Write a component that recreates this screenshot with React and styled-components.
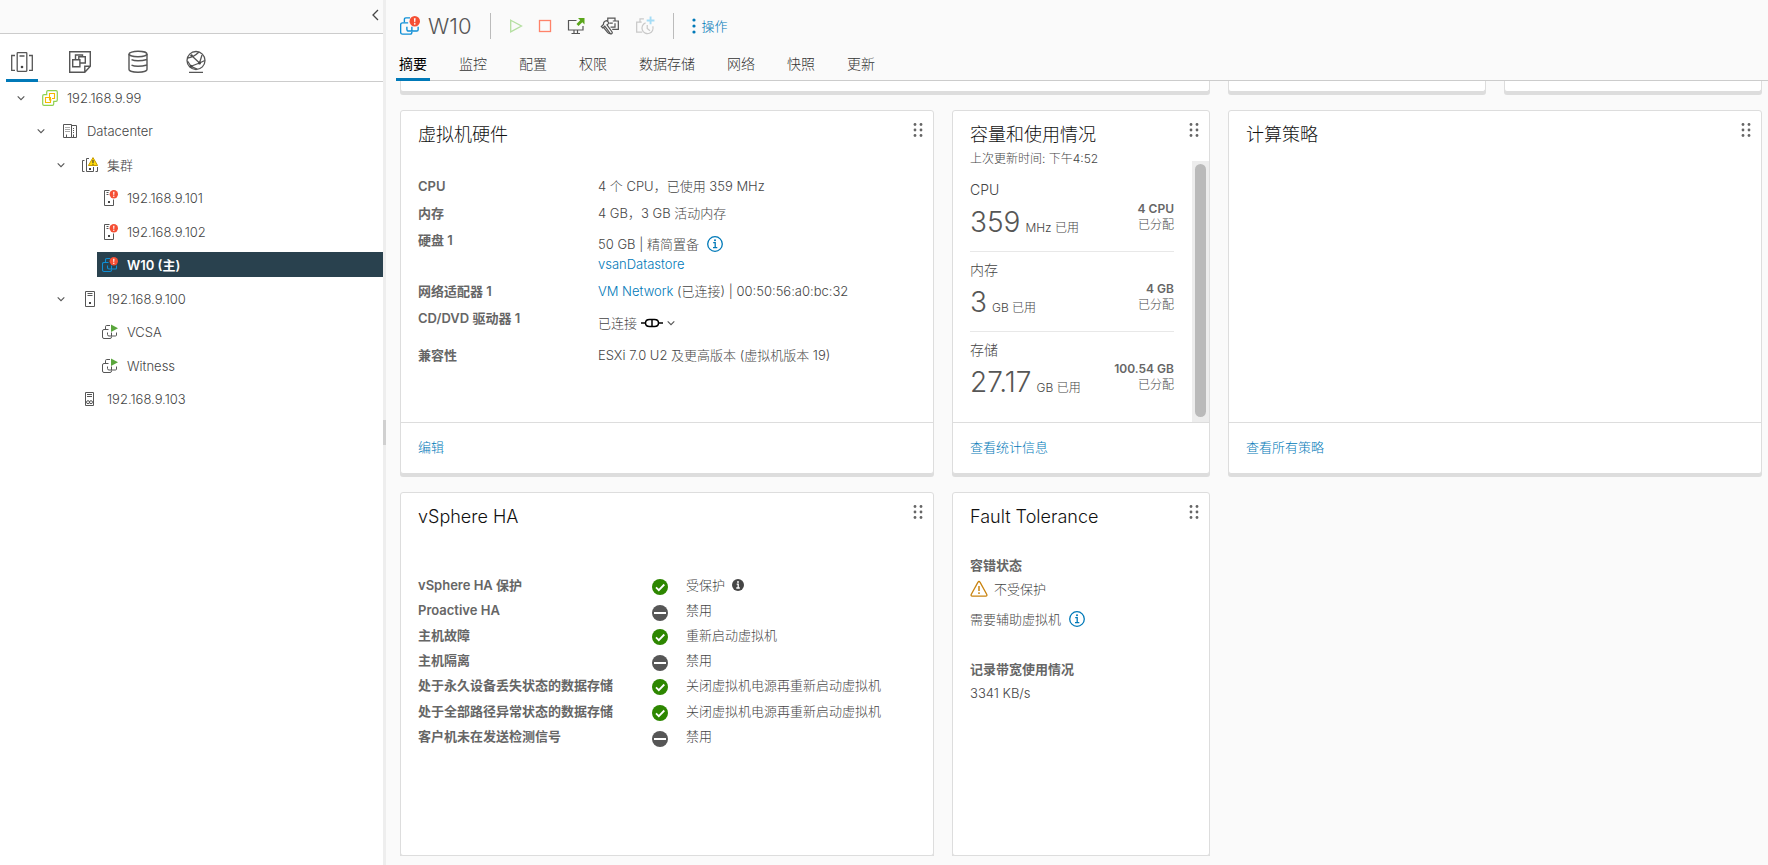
import React, { useState } from 'react';
import styled, { createGlobalStyle, css } from 'styled-components';

const GlobalStyle = createGlobalStyle`
  * {
    box-sizing: border-box;
  }
  body {
    margin: 0;
    background: #fafafa;
    color: #454545;
    font-family: Inter, "Noto Sans CJK SC", sans-serif;
    font-size: 13px;
    font-weight: 300;
    line-height: 20px;
  }
  button {
    padding: 0;
    border: 0;
    background: none;
    color: inherit;
    font: inherit;
    cursor: pointer;
  }
  a {
    color: #0079b8;
    text-decoration: none;
  }
  svg {
    display: block;
    flex: none;
  }
`;

/* ---------- icons ---------- */

const Svg = ({ size = 16, box = 16, color = '#565656', width = 1, children }) => (
  <svg width={size} height={size} viewBox={`0 0 ${box} ${box}`} fill="none" stroke={color} strokeWidth={width} aria-hidden="true">
    {children}
  </svg>
);

const Chevron = ({ size = 8 }) => (
  <Svg size={size} box={8} color="#565656" width={1.1}>
    <path d="M.7 2.3L4 5.600l3.300-3.300" />
  </Svg>
);

const AlertBadge = () => (
  <g stroke="none">
    <circle cx="11.8" cy="4.2" r="4.2" fill="#f54f34" />
    <path d="M11.1 1.8h1.4l-.3 3.100h-.8z" fill="#fff" />
    <circle cx="11.8" cy="6.200" r=".7" fill="#fff" />
  </g>
);

const VmShape = () => (
  <>
    <path d="M3.5 5V2.7q0-1.2 1.2-1.2H8" />
    <path d="M9.5 12.5V13q0 1.5-1.5 1.5H2Q.5 14.5.5 13V7Q.5 5.5 2 5.5h4.5" />
    <path d="M5.5 8.5v2q0 1.5 1.5 1.500h6.500q1 0 1-1V8.500" />
    <path d="M9.500 12V8.500" />
  </>
);

const VmAlertIcon = ({ size, color = '#0f8fd6' }) => (
  <Svg size={size} color={color} width={1.1}>
    <VmShape />
    <AlertBadge />
  </Svg>
);

const VmRunningIcon = () => (
  <Svg>
    <VmShape />
    <path d="M9 .5l7 3.700-7 3.800z" fill="#5aa63c" stroke="none" />
  </Svg>
);

const HostIcon = () => (
  <Svg>
    <path d="M3.500.5h9v15h-9zM5.500 2.500h5M5.500 4.500h5" />
    <path d="M7 11h2v2H7z" fill="#454545" stroke="none" />
  </Svg>
);

const HostAlertIcon = () => (
  <Svg>
    <path d="M7.500.5h-5v15h9V9.500M4.500 2.500h2M4.500 4.500h2" />
    <path d="M6 11h2v2H6z" fill="#454545" stroke="none" />
    <AlertBadge />
  </Svg>
);

const HostStandbyIcon = () => (
  <Svg>
    <path d="M3.500 1.500h8v13h-8zM5 3.500h5M5 5.500h5" />
    <circle cx="6" cy="11.200" r="1.500" />
    <circle cx="9" cy="11.200" r="1.500" />
  </Svg>
);

const VcenterIcon = () => (
  <Svg>
    <path d="M6 .7h8q1.300 0 1.300 1.300v8q0 1.300-1.300 1.300h-2.300V14q0 1.300-1.300 1.300H2Q.7 15.300.7 14V6Q.7 4.700 2 4.700h2.700V2Q4.700.7 6 .7z" stroke="#8fd14f" strokeWidth="1.200" />
    <path d="M7.500 6V3.500h5v5H10M3.500 7.500h5v5h-5zM7.500 6v4h2" stroke="#f5b800" strokeWidth="1.100" />
  </Svg>
);

const DatacenterIcon = () => (
  <Svg>
    <path d="M1.500 1.500h8v13h-8zM9.500 2.500h5v12h-5" />
    <path d="M3.500 4.500H8M3.500 6.500H8M3.500 8.500H8M11 5.500h2M11 7.500h2M11 9.500h2" strokeDasharray="1 1" />
    <path d="M4.500 14.500v-3M11.500 14.500v-3" />
  </Svg>
);

const ClusterWarningIcon = () => (
  <Svg>
    <path d="M2.500 3.500h-2v11h2M13.500 14.500h2V10M7 1.500H4.500v13h7V10" />
    <path d="M7 11h2v2H7z" fill="#454545" stroke="none" />
    <path d="M11 .6L15.600 8.500H6.400z" fill="#ffdc0b" stroke="#c69a00" strokeLinejoin="round" />
    <path d="M11 3v3M11 6.800v1" stroke="#333" strokeWidth="1.100" />
  </Svg>
);

const HostsTabIcon = () => (
  <Svg size={24} box={24} width={1.3}>
    <rect x="7.2" y="2.7" width="9.6" height="18.6" rx=".5" />
    <path d="M9.5 6h5M5 5.500H1.700v14.800H5M19 5.500h3.300v14.800H19" />
    <circle cx="12" cy="17" r="1.300" fill="#454545" stroke="none" />
  </Svg>
);

const VmsTabIcon = () => (
  <Svg size={24} box={24} width={1.4}>
    <path d="M1.700 1.700h20.600v14.500l-5.500 6H1.700zM16.800 22v-5.800h5.400" />
    <path d="M4.700 9.700h7.200v7H4.700zM7.500 9.500V5h7v2M12 13h5.300V6.800h-6.500v2.700" />
  </Svg>
);

const StorageTabIcon = () => (
  <Svg size={24} box={24} width={1.4}>
    <ellipse cx="12" cy="4" rx="9" ry="2.700" />
    <path d="M3 4v15.500c0 1.500 4 2.700 9 2.700s9-1.200 9-2.700V4" />
    <path d="M5.500 9.700c1.500.7 3.800 1.100 6.500 1.100s6-.4 9-1.300M5.500 15.200c1.500.7 3.800 1.100 6.500 1.100s6-.4 9-1.300" />
  </Svg>
);

const NetworkTabIcon = () => (
  <Svg size={24} box={24} width={1.3}>
    <circle cx="12" cy="10.500" r="9" />
    <path d="M5 22.300h14M3.500 8c4-.5 8-2.500 11.500-6M7.500 5.500l8 7.500 5.300-2.500M15.500 13L7 16.300 3.500 11M15.500 13l2.500-8M7 16.300l6 2.900" />
    <circle cx="15.500" cy="13" r="1.500" fill="#454545" stroke="none" />
    <circle cx="7" cy="16.300" r="1.500" fill="#454545" stroke="none" />
    <circle cx="7.500" cy="5.500" r="1.200" fill="#454545" stroke="none" />
  </Svg>
);

const PlayIcon = () => (
  <Svg size={14} box={14} color="#b4dfa0" width={1.3}>
    <path d="M1.700 1.200L12.500 7 1.700 12.800z" />
  </Svg>
);

const StopIcon = () => (
  <Svg size={14} box={14} color="#ff8269" width={1.3}>
    <rect x="1.500" y="1.500" width="11" height="11" />
  </Svg>
);

const ConsoleIcon = () => (
  <Svg size={18} box={18} width={1.2}>
    <path d="M9.500 3.500h-8v9.500h14.500V9M7 13v3.200M10.500 13v3.200M4.500 16.500h8.500" />
    <path d="M11 1h6.500v6.500l-2.200-2.200-3.800 3.700-2-2 3.700-3.800z" fill="#5aa61a" stroke="none" />
  </Svg>
);

const SettingsIcon = () => (
  <Svg size={20} box={18} width={1.1}>
    <path d="M7 4.500V2h6.500v2.500M9 6.500h2.500M11.500 4.500h5v7.500h-5.500M9.500 10h4V6.500" />
    <path d="M6.300 4.200c-2 .3-3.300 1.700-3.200 3.400L1.200 9.500l1.300 1.300 1.800-1.600 5 6.600c.8.900 2.300-.4 1.600-1.400L6.300 8l1.900-1.500z" />
    <path d="M3.100 10.300l3.700 4.500q.9 1.200 2.500 1" />
  </Svg>
);

const SnapshotIcon = () => (
  <Svg size={20} box={18} color="#c9c9c9" width={1.1}>
    <path d="M4.500 5.500v-3H8M6.500 14.500h-5v-9H6" />
    <path d="M9.500 6.200a5 5 0 1 0 6.500 3" />
    <path d="M11 8v3.200l2.500 2" />
    <path d="M14 .5v7M10.500 4h7" stroke="#a5dcf5" strokeWidth="1.700" />
  </Svg>
);

const InfoIcon = () => (
  <Svg color="#0079b8" width={1.3}>
    <circle cx="8" cy="8" r="7.300" />
    <path d="M6.200 6.700h2v4.800M6 11.700h4.300" />
    <circle cx="8" cy="4.200" r="1" fill="#0079b8" stroke="none" />
  </Svg>
);

const InfoSolidIcon = () => (
  <Svg size={12} box={12} color="#fff" width={1.3}>
    <circle cx="6" cy="6" r="6" fill="#454545" stroke="none" />
    <path d="M4.700 5.200h1.500v3.500M4.300 9h3.500" />
    <circle cx="6" cy="3" r=".9" fill="#fff" stroke="none" />
  </Svg>
);

const CheckIcon = () => (
  <Svg color="#fff" width={1.8}>
    <circle cx="8" cy="8" r="8" fill="#2d8700" stroke="none" />
    <path d="M4 8.300l2.800 2.800L12.300 5.500" />
  </Svg>
);

const MinusIcon = () => (
  <Svg color="#fff" width={2}>
    <circle cx="8" cy="8" r="8" fill="#565656" stroke="none" />
    <path d="M2 8h12" />
  </Svg>
);

const WarningIcon = () => (
  <Svg size={18} box={18} color="#c98411" width={1.3}>
    <path d="M9 1.500q.7 0 1 .6l6.800 12.400q.5 1.500-1 1.700H2.200q-1.500-.2-1-1.700L8 2.100q.3-.6 1-.6z" />
    <path d="M9 6v5M9 12.300v1.700" strokeWidth="1.500" />
  </Svg>
);

const PlugIcon = () => (
  <svg width="22" height="10" viewBox="0 0 22 10" fill="none" stroke="#000" strokeWidth="1.500" aria-hidden="true">
    <path d="M0 5h4.500M17.500 5H22M11 1.500H8.500Q4.500 1.500 4.500 5t4 3.500H11M11 1.500h2.500q4 0 4 3.500t-4 3.500H11M11 1.500v7" />
  </svg>
);

const GripIcon = () => (
  <svg width="10" height="16" viewBox="0 0 10 16" fill="#666" aria-hidden="true">
    {[2.5, 8, 13.5].map((y) => (
      <g key={y}>
        <circle cx="2" cy={y} r="1.400" />
        <circle cx="8" cy={y} r="1.400" />
      </g>
    ))}
  </svg>
);

const DotsIcon = () => (
  <svg width="4" height="16" viewBox="0 0 4 16" fill="#0079b8" aria-hidden="true">
    <circle cx="2" cy="2" r="1.600" />
    <circle cx="2" cy="8" r="1.600" />
    <circle cx="2" cy="14" r="1.600" />
  </svg>
);

/* ---------- layout ---------- */

const Page = styled.div`
  display: flex;
  height: 100vh;
  overflow: hidden;
`;

const Sidebar = styled.aside`
  display: flex;
  flex-direction: column;
  flex: none;
  width: 383px;
  background: #fff;
`;

const SidebarTop = styled.div`
  display: flex;
  justify-content: flex-end;
  align-items: center;
  height: 34px;
  padding: 0 2px 4px 0;
  border-bottom: 1px solid #ccc;
  background: #fafafa;
`;

const ViewTabs = styled.nav`
  display: flex;
  align-items: flex-end;
  gap: 26px;
  height: 48px;
  margin-left: 6px;
  border-bottom: 1px solid #ccc;
`;

const ViewTab = styled.button`
  display: flex;
  justify-content: center;
  width: 32px;
  height: 35px;
  margin-bottom: -1px;
  padding-top: 3px;
  border-bottom: 3px solid ${(p) => (p.$active ? '#0079b8' : 'transparent')};
`;

const Tree = styled.ul`
  margin: 0;
  padding: 3px 0 0;
  list-style: none;
`;

const TreeRow = styled.li`
  display: flex;
  align-items: center;
  height: 25px;
  margin-bottom: 8px;
  padding-left: ${(p) => p.$level * 20}px;
  &:nth-child(even) {
    margin-bottom: 9px;
  }
`;

const Caret = styled.button`
  display: flex;
  justify-content: center;
  flex: none;
  width: 37px;
  padding-left: 5px;
`;

const CaretSpace = styled.span`
  flex: none;
  width: 37px;
`;

const TreeLabel = styled.button`
  display: flex;
  align-items: center;
  flex: 1;
  gap: 9px;
  height: 25px;
  padding-left: 5px;
  text-align: left;
  ${(p) =>
    p.$selected &&
    css`
      background: #29414e;
      color: #fff;
      font-weight: 600;
    `}
`;

const Splitter = styled.div`
  display: flex;
  align-items: center;
  flex: none;
  width: 3px;
  background: #eee;
`;

const SplitterGrip = styled.div`
  width: 3px;
  height: 25px;
  background: #d0d0d0;
`;

const Main = styled.main`
  display: flex;
  flex-direction: column;
  flex: 1;
  min-width: 0;
`;

const Header = styled.header`
  display: flex;
  align-items: center;
  flex: none;
  height: 50px;
  padding: 1px 0 0 14px;
`;

const PageTitle = styled.h1`
  margin: 0 0 0 8px;
  color: #565656;
  font-size: 22px;
  font-weight: 300;
  line-height: 26px;
`;

const Divider = styled.span`
  width: 1px;
  height: 26px;
  margin: 0 18px;
  background: #bbb;
`;

const Tools = styled.div`
  display: flex;
  align-items: center;
  gap: 15px;
`;

const ActionsButton = styled.button`
  display: flex;
  align-items: center;
  gap: 6px;
  color: #0079b8;
`;

const Tabs = styled.nav`
  display: flex;
  flex: none;
  gap: 26px;
  height: 31px;
  margin-left: 10px;
  border-bottom: 1px solid #ccc;
`;

const Tab = styled.button`
  flex: none;
  height: 31px;
  padding: 0 3px;
  border-bottom: 3px solid ${(p) => (p.$active ? '#0079b8' : 'transparent')};
  color: ${(p) => (p.$active ? '#000' : '#333')};
  font-size: 14px;
  font-weight: ${(p) => (p.$active ? 400 : 300)};
`;

const Cards = styled.section`
  display: grid;
  grid-template-columns: repeat(5, 1fr);
  grid-template-rows: 11px;
  grid-auto-rows: 364px;
  gap: 18px;
  min-height: 0;
  padding: 0 6px 0 14px;
  overflow: hidden;
`;

const Card = styled.article`
  display: flex;
  flex-direction: column;
  grid-column: span ${(p) => p.$span || 1};
  min-width: 0;
  border: 1px solid #ddd;
  border-radius: 3px;
  background: #fff;
  box-shadow: 0 3px 0 #ddd;
`;

const CardTail = styled(Card)`
  border-top: 0;
  border-radius: 0 0 3px 3px;
`;

const CardHead = styled.div`
  display: flex;
  justify-content: space-between;
  padding: 11px 10px 0 17px;
`;

const CardTitle = styled.h2`
  margin: 0;
  padding-top: 1px;
  color: #111;
  font-size: 18px;
  font-weight: 300;
  line-height: 24px;
`;

const Grip = styled.button`
  height: 16px;
`;

const CardBody = styled.div`
  flex: 1;
  min-height: 0;
  padding: ${(p) => p.$top || 0}px 17px 0;
`;

const CardFoot = styled.div`
  display: flex;
  align-items: center;
  height: 51px;
  padding: 0 17px 2px;
  border-top: 1px solid #ddd;
`;

const Hardware = styled.dl`
  display: grid;
  grid-template-columns: 180px 1fr;
  margin: 0;
`;

const HardwareName = styled.dt`
  padding: 3px 0 4px;
  color: #666;
  font-weight: 600;
`;

const HardwareValue = styled.dd`
  margin: 0;
  padding: ${(p) => (p.$tall ? '8px 0 9px' : '3px 0 4px')};
`;

const Inline = styled.span`
  display: flex;
  align-items: center;
  gap: ${(p) => p.$gap || 8}px;
`;

const DiskValue = styled(HardwareValue)`
  padding: 7px 0 4px;
`;

const Subtitle = styled.p`
  margin: 0;
  padding: 3px 17px 0;
  font-size: 12px;
  line-height: 18px;
`;

const UsagePane = styled.div`
  display: flex;
  flex: 1;
  min-height: 0;
  margin-top: -7px;
`;

const UsageList = styled.div`
  flex: 1;
  padding: 6px 18px 0 17px;
`;

const Usage = styled.section`
  height: 80px;
  padding-top: 9px;
  border-bottom: 1px solid #e8e8e8;
  &:first-child {
    height: 85px;
    padding-top: 14px;
  }
  &:last-child {
    border-bottom: 0;
  }
`;

const UsageName = styled.h3`
  margin: 0;
  font-size: 14px;
  font-weight: 300;
  line-height: 18px;
`;

const UsageRow = styled.div`
  display: flex;
  justify-content: space-between;
  font-size: 12px;
  line-height: 16px;
`;

const UsageValue = styled.div`
  padding-top: 9px;
  line-height: 28px;
`;

const Big = styled.span`
  margin-right: 5px;
  color: #565656;
  font-size: 28px;
`;

const Total = styled.div`
  padding-top: 2px;
  text-align: right;
`;

const Strong = styled.strong`
  display: block;
  color: #666;
  font-weight: 600;
`;

const ScrollTrack = styled.div`
  display: flex;
  width: 17px;
  padding: 3px 3px 5px;
  background: #ededed;
`;

const ScrollThumb = styled.div`
  flex: 1;
  border-radius: 6px;
  background: #bababa;
`;

const HaTable = styled.table`
  width: 100%;
  border-collapse: collapse;
`;

const HaRow = styled.tr`
  height: ${(p) => (p.$off ? 24 : 26)}px;
`;

const HaName = styled.th`
  width: 234px;
  padding: 0;
  color: #666;
  font-weight: 600;
  text-align: left;
`;

const HaIcon = styled.td`
  width: 34px;
  padding: ${(p) => (p.$off ? 6 : 3)}px 0 0;
`;

const HaValue = styled.td`
  padding: 0;
`;

const FtName = styled.h3`
  margin: 0 0 4px;
  color: #666;
  font-size: 13px;
  font-weight: 600;
`;

const FtLine = styled.div`
  display: flex;
  align-items: center;
  gap: ${(p) => p.$gap || 0}px;
  height: 20px;
  margin-bottom: ${(p) => p.$after || 0}px;
`;

/* ---------- data ---------- */

const tree = [
  { label: '192.168.9.99', level: 0, icon: VcenterIcon, open: true },
  { label: 'Datacenter', level: 1, icon: DatacenterIcon, open: true },
  { label: '集群', level: 2, icon: ClusterWarningIcon, open: true },
  { label: '192.168.9.101', level: 3, icon: HostAlertIcon },
  { label: '192.168.9.102', level: 3, icon: HostAlertIcon },
  { label: 'W10 (主)', level: 3, icon: VmAlertIcon },
  { label: '192.168.9.100', level: 2, icon: HostIcon, open: true },
  { label: 'VCSA', level: 3, icon: VmRunningIcon },
  { label: 'Witness', level: 3, icon: VmRunningIcon },
  { label: '192.168.9.103', level: 2, icon: HostStandbyIcon },
];

const views = [
  { name: '主机和集群', icon: HostsTabIcon },
  { name: '虚拟机和模板', icon: VmsTabIcon },
  { name: '存储', icon: StorageTabIcon },
  { name: '网络', icon: NetworkTabIcon },
];

const tools = [
  { name: '打开电源', icon: PlayIcon },
  { name: '关闭电源', icon: StopIcon },
  { name: '启动控制台', icon: ConsoleIcon },
  { name: '编辑设置', icon: SettingsIcon },
  { name: '生成快照', icon: SnapshotIcon },
];

const tabs = ['摘要', '监控', '配置', '权限', '数据存储', '网络', '快照', '更新'];

const usages = [
  { name: 'CPU', used: '359', unit: 'MHz', total: '4 CPU' },
  { name: '内存', used: '3', unit: 'GB', total: '4 GB' },
  { name: '存储', used: '27.17', unit: 'GB', total: '100.54 GB' },
];

const haRows = [
  { name: 'vSphere HA 保护', on: true, value: '受保护', info: true },
  { name: 'Proactive HA', on: false, value: '禁用' },
  { name: '主机故障', on: true, value: '重新启动虚拟机' },
  { name: '主机隔离', on: false, value: '禁用' },
  { name: '处于永久设备丢失状态的数据存储', on: true, value: '关闭虚拟机电源再重新启动虚拟机' },
  { name: '处于全部路径异常状态的数据存储', on: true, value: '关闭虚拟机电源再重新启动虚拟机' },
  { name: '客户机未在发送检测信号', on: false, value: '禁用' },
];

/* ---------- components ---------- */

const CardHeader = ({ title }) => (
  <CardHead>
    <CardTitle>{title}</CardTitle>
    <Grip aria-label="移动">
      <GripIcon />
    </Grip>
  </CardHead>
);

const Navigator = () => {
  const [view, setView] = useState(0);
  const [selected, setSelected] = useState('W10 (主)');

  return (
    <Sidebar>
      <SidebarTop>
        <button aria-label="折叠">
          <Svg size={12} box={12} color="#454545" width={1.3}>
            <path d="M9 1L4 6l5 5" />
          </Svg>
        </button>
      </SidebarTop>
      <ViewTabs>
        {views.map(({ name, icon: Icon }, i) => (
          <ViewTab key={name} aria-label={name} $active={i === view} onClick={() => setView(i)}>
            <Icon />
          </ViewTab>
        ))}
      </ViewTabs>
      <Tree>
        {tree.map(({ label, level, icon: Icon, open }) => (
          <TreeRow key={label} $level={level}>
            {open ? (
              <Caret aria-label={`折叠 ${label}`}>
                <Chevron />
              </Caret>
            ) : (
              <CaretSpace />
            )}
            <TreeLabel $selected={label === selected} onClick={() => setSelected(label)}>
              <Icon />
              {label}
            </TreeLabel>
          </TreeRow>
        ))}
      </Tree>
    </Sidebar>
  );
};

const HardwareCard = () => (
  <Card $span={2}>
    <CardHeader title="虚拟机硬件" />
    <CardBody $top={26}>
      <Hardware>
        <HardwareName>CPU</HardwareName>
        <HardwareValue>4 个 CPU，已使用 359 MHz</HardwareValue>
        <HardwareName>内存</HardwareName>
        <HardwareValue>4 GB，3 GB 活动内存</HardwareValue>
        <HardwareName>硬盘 1</HardwareName>
        <DiskValue>
          <Inline>
            50 GB | 精简置备
            <InfoIcon />
          </Inline>
          <a href="#datastore">vsanDatastore</a>
        </DiskValue>
        <HardwareName>网络适配器 1</HardwareName>
        <HardwareValue>
          <a href="#network">VM Network</a> (已连接) | 00:50:56:a0:bc:32
        </HardwareValue>
        <HardwareName>CD/DVD 驱动器 1</HardwareName>
        <HardwareValue $tall>
          <Inline $gap={4}>
            已连接
            <PlugIcon />
            <Chevron />
          </Inline>
        </HardwareValue>
        <HardwareName>兼容性</HardwareName>
        <HardwareValue>ESXi 7.0 U2 及更高版本 (虚拟机版本 19)</HardwareValue>
      </Hardware>
    </CardBody>
    <CardFoot>
      <a href="#edit">编辑</a>
    </CardFoot>
  </Card>
);

const UsageCard = () => (
  <Card>
    <CardHeader title="容量和使用情况" />
    <Subtitle>上次更新时间: 下午4:52</Subtitle>
    <UsagePane>
      <UsageList>
        {usages.map(({ name, used, unit, total }) => (
          <Usage key={name}>
            <UsageName>{name}</UsageName>
            <UsageRow>
              <UsageValue>
                <Big>{used}</Big>
                {unit} 已用
              </UsageValue>
              <Total>
                <Strong>{total}</Strong>
                已分配
              </Total>
            </UsageRow>
          </Usage>
        ))}
      </UsageList>
      <ScrollTrack>
        <ScrollThumb />
      </ScrollTrack>
    </UsagePane>
    <CardFoot>
      <a href="#stats">查看统计信息</a>
    </CardFoot>
  </Card>
);

const PolicyCard = () => (
  <Card $span={2}>
    <CardHeader title="计算策略" />
    <CardBody />
    <CardFoot>
      <a href="#policies">查看所有策略</a>
    </CardFoot>
  </Card>
);

const HaCard = () => (
  <Card $span={2}>
    <CardHeader title="vSphere HA" />
    <CardBody $top={43}>
      <HaTable>
        <tbody>
          {haRows.map(({ name, on, value, info }) => (
            <HaRow key={name} $off={!on}>
              <HaName scope="row">{name}</HaName>
              <HaIcon $off={!on}>{on ? <CheckIcon /> : <MinusIcon />}</HaIcon>
              <HaValue>
                <Inline $gap={7}>
                  {value}
                  {info && <InfoSolidIcon />}
                </Inline>
              </HaValue>
            </HaRow>
          ))}
        </tbody>
      </HaTable>
    </CardBody>
  </Card>
);

const FaultToleranceCard = () => (
  <Card>
    <CardHeader title="Fault Tolerance" />
    <CardBody $top={26}>
      <FtName>容错状态</FtName>
      <FtLine $gap={6} $after={10}>
        <WarningIcon />
        不受保护
      </FtLine>
      <FtLine $gap={8} $after={30}>
        需要辅助虚拟机
        <InfoIcon />
      </FtLine>
      <FtName>记录带宽使用情况</FtName>
      <FtLine>3341 KB/s</FtLine>
    </CardBody>
  </Card>
);

const App = () => {
  const [tab, setTab] = useState('摘要');

  return (
    <Page>
      <GlobalStyle />
      <Navigator />
      <Splitter>
        <SplitterGrip />
      </Splitter>
      <Main>
        <Header>
          <VmAlertIcon size={20} />
          <PageTitle>W10</PageTitle>
          <Divider />
          <Tools>
            {tools.map(({ name, icon: Icon }) => (
              <button key={name} aria-label={name}>
                <Icon />
              </button>
            ))}
          </Tools>
          <Divider />
          <ActionsButton>
            <DotsIcon />
            操作
          </ActionsButton>
        </Header>
        <Tabs>
          {tabs.map((name) => (
            <Tab key={name} $active={name === tab} onClick={() => setTab(name)}>
              {name}
            </Tab>
          ))}
        </Tabs>
        <Cards>
          <CardTail $span={3} />
          <CardTail />
          <CardTail />
          <HardwareCard />
          <UsageCard />
          <PolicyCard />
          <HaCard />
          <FaultToleranceCard />
        </Cards>
      </Main>
    </Page>
  );
};

export default App;
